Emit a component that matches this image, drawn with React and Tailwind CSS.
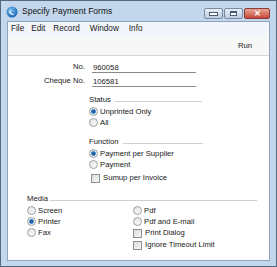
import React from 'react';

const font = { fontFamily: '"Liberation Sans", Arial, sans-serif' };

const Radio = ({ checked, label }) => (
  <div className="flex items-center h-[11px]">
    <span className="w-[9px] h-[9px] rounded-full border border-[#9aa0a6] bg-gradient-to-br from-[#e4e4e4] to-[#fbfbfb] flex items-center justify-center">
      {checked && <span className="w-[5px] h-[5px] rounded-full bg-[#1f5f9e] border border-[#2f7fc8]" />}
    </span>
    <span className="ml-[2px] text-[7.7px] text-[#202020] leading-none">{label}</span>
  </div>
);

const Check = ({ label }) => (
  <div className="flex items-center h-[12px]">
    <span className="w-[9px] h-[9px] border border-[#8e8f8f] bg-gradient-to-br from-[#dcdcdc] to-[#f7f7f7]" />
    <span className="ml-[3px] text-[7.7px] text-[#202020] leading-none">{label}</span>
  </div>
);

const Header = ({ label, lineStart, lineEnd }) => (
  <div className="flex items-center h-[12px] text-[7.7px] text-[#202020]">
    <span className="leading-none">{label}</span>
    <span className="h-px bg-[#cfcfcf] mt-[3px]" style={{ marginLeft: lineStart, width: lineEnd }} />
  </div>
);

const Field = ({ label, value }) => (
  <div className="flex items-center h-[12px]">
    <span className="w-[77px] text-right text-[7.7px] text-[#202020] leading-none">{label}</span>
    <span className="ml-[7px] w-[104px] h-[11px] border-b border-[#8a8a8a] text-[7.7px] text-[#202020] leading-[11px] pl-[1px]">{value}</span>
  </div>
);

const AppIcon = () => (
  <svg width="12" height="12" viewBox="0 0 12 12">
    <defs>
      <radialGradient id="g" cx="40%" cy="35%" r="65%">
        <stop offset="0" stopColor="#7fc3f0" />
        <stop offset="1" stopColor="#1b63b4" />
      </radialGradient>
    </defs>
    <circle cx="6" cy="6" r="5.5" fill="url(#g)" />
    <path d="M3 4.5 C3 8.5 7 10 9.5 7.5 C7.5 8.8 4.8 8 4.2 4.6 Z" fill="#ffffff" />
  </svg>
);

export default function App() {
  return (
    <div className="w-[277px] h-[267px] bg-[#c3d7ec] border border-[#56687c] flex flex-col" style={font}>
      {/* title bar */}
      <div className="h-[20px] flex items-start shrink-0">
        <div className="mt-[5px] ml-[5px]"><AppIcon /></div>
        <span className="ml-[4px] mt-[6px] text-[8.5px] text-[#101010] leading-none">Specify Payment Forms</span>
        <div className="ml-auto mr-[6px] mt-[7px] flex gap-[1px]">
          <div className="w-[19px] h-[11px] rounded-[2px] border border-[#7a8ba0] bg-gradient-to-b from-[#e6eef8] to-[#bccde2] flex items-end justify-center pb-[2px]">
            <span className="w-[7px] h-[2px] bg-white border border-[#4a5a70] box-content" />
          </div>
          <div className="w-[19px] h-[11px] rounded-[2px] border border-[#7a8ba0] bg-gradient-to-b from-[#e6eef8] to-[#bccde2] flex items-center justify-center">
            <span className="w-[7px] h-[5px] border border-[#4a5a70] border-t-2 bg-white" />
          </div>
          <div className="w-[26px] h-[11px] rounded-[2px] border border-[#8a3a34] bg-gradient-to-b from-[#e8a494] to-[#c4463a] flex items-center justify-center text-white text-[8px] font-bold leading-none">
            ✕
          </div>
        </div>
      </div>
      {/* window body */}
      <div className="mx-[6px] flex-1 flex flex-col bg-white border border-[#8ea4bd]">
        <div className="h-[14px] bg-[#f2f5fa] flex items-center text-[8.2px] text-[#1a1a1a] leading-none">
          <span className="ml-[3px]">File</span>
          <span className="ml-[7px]">Edit</span>
          <span className="ml-[8px]">Record</span>
          <span className="ml-[10px]">Window</span>
          <span className="ml-[10px]">Info</span>
        </div>
        <div className="h-[20px] bg-[#f7f7f7] border-b border-[#d7d7d7] flex items-center justify-end pr-[17px] text-[7.7px] text-[#202020] leading-none">
          Run
        </div>
        <div className="flex-1 flex flex-col pt-[5px]">
          <Field label="No." value="960058" />
          <div className="mt-[2px]"><Field label="Cheque No." value="106581" /></div>
          <div className="ml-[81px] mt-[7px] flex flex-col">
            <Header label="Status" lineStart="4px" lineEnd="87px" />
            <Radio checked label="Unprinted Only" />
            <Radio label="All" />
            <div className="mt-[8px]"><Header label="Function" lineStart="4px" lineEnd="80px" /></div>
            <Radio checked label="Payment per Supplier" />
            <Radio label="Payment" />
            <div className="ml-[2px] mt-[2px]"><Check label="Sumup per Invoice" /></div>
          </div>
          <div className="ml-[19px] mt-[9px] flex flex-col">
            <Header label="Media" lineStart="2px" lineEnd="207px" />
            <div className="flex">
              <div className="w-[106px] flex flex-col">
                <Radio label="Screen" />
                <Radio checked label="Printer" />
                <Radio label="Fax" />
              </div>
              <div className="flex flex-col">
                <Radio label="Pdf" />
                <Radio label="Pdf and E-mail" />
                <Check label="Print Dialog" />
                <Check label="Ignore Timeout Limit" />
              </div>
            </div>
          </div>
        </div>
      </div>
      <div className="h-[5px] shrink-0" />
    </div>
  );
}
